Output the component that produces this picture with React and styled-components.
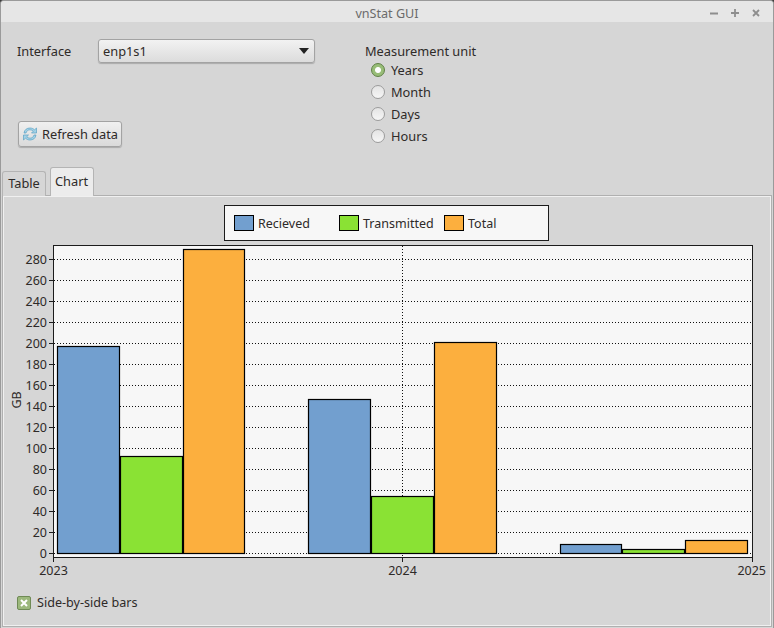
import React from "react";
import styled, { createGlobalStyle } from "styled-components";

const GlobalStyle = createGlobalStyle`
  html, body { margin: 0; padding: 0; background: #3c3c3c; }
  * { box-sizing: border-box; }
`;

const series = [
  { name: "Recieved", color: "#729fcf" },
  { name: "Transmitted", color: "#8ae234" },
  { name: "Total", color: "#fcaf3e" },
];
const bars = [
  { x: [57.5, 120.5, 183.5], w: [62, 62, 61], top: [346.5, 456.5, 249.5] },
  { x: [308.5, 371.5, 434.5], w: [62, 62, 62], top: [399.5, 496.5, 342.5] },
  { x: [560.5, 622.5, 685.5], w: [61, 62, 62], top: [544.5, 549.5, 540.5] },
];
const ticks = Array.from({ length: 15 }, (_, i) => i * 20);
const units = ["Years", "Month", "Days", "Hours"];

const Window = styled.div`
  width: 774px;
  height: 628px;
  display: flex;
  flex-direction: column;
  background: #d6d6d6;
  border: 1px solid #9a9a9a;
  border-bottom: 0;
  border-radius: 4px 4px 0 0;
  overflow: hidden;
  color: #2e2a28;
  font: 12.8px "Noto Sans", sans-serif;
`;
const TitleBar = styled.div`
  height: 21px;
  flex: none;
  padding-top: 3px;
  background: #e6e6e6;
  display: flex;
  align-items: center;
  justify-content: center;
  position: relative;
  color: #6b6b6b;
  font-size: 12.6px;
`;
const WinControls = styled.div`
  position: absolute;
  right: 13px;
  top: 8px;
  display: flex;
  gap: 13px;
  svg { display: block; }
`;
const Top = styled.div`
  height: 145px;
  flex: none;
  display: grid;
  grid-template-columns: 364px 1fr;
`;
const LeftCol = styled.div`
  padding: 17px 0 0 16px;
  display: flex;
  flex-direction: column;
`;
const InterfaceRow = styled.div`
  display: flex;
  align-items: center;
  height: 24px;
`;
const FieldLabel = styled.span`
  width: 81px;
`;
const Combo = styled.div`
  width: 217px;
  height: 24px;
  display: flex;
  align-items: center;
  justify-content: space-between;
  padding: 0 5px 0 4px;
  border: 1px solid #a3a3a3;
  border-radius: 3px;
  background: linear-gradient(#f2f2f2, #dcdcdc);
  box-shadow: 0 1px 1px rgba(0, 0, 0, 0.2);
`;
const Arrow = styled.i`
  width: 0;
  height: 0;
  border-left: 5px solid transparent;
  border-right: 5px solid transparent;
  border-top: 6px solid #222;
`;
const Button = styled.button`
  margin: 58px 0 0 1px;
  width: 104px;
  height: 26px;
  padding: 0 0 0 3px;
  display: flex;
  align-items: center;
  gap: 4px;
  border: 1px solid #a3a3a3;
  border-radius: 3px;
  background: linear-gradient(#f0f0f0, #dadada);
  box-shadow: 0 1px 1px rgba(0, 0, 0, 0.2);
  color: inherit;
  font: inherit;
`;
const RightCol = styled.div`
  padding-top: 20px;
`;
const RadioList = styled.div`
  margin-top: -1px;
`;
const RadioRow = styled.div`
  display: flex;
  align-items: center;
  gap: 6px;
  height: 22px;
  padding-left: 6px;
`;
const Radio = styled.span`
  width: 14px;
  height: 14px;
  border-radius: 50%;
  border: 1px solid ${(p) => (p.$on ? "#5f8045" : "#9c9c9c")};
  background: ${(p) =>
    p.$on
      ? "radial-gradient(circle, #fff 0 2.5px, #98bd78 3.5px)"
      : "linear-gradient(#e4e4e4, #f6f6f6)"};
`;
const Tabs = styled.div`
  height: 29px;
  flex: none;
  display: flex;
  align-items: flex-end;
  padding-left: 1px;
  gap: 4px;
  position: relative;
  z-index: 1;
  margin-bottom: -1px;
`;
const Tab = styled.div`
  width: 44px;
  height: ${(p) => (p.$on ? 29 : 25)}px;
  display: flex;
  align-items: ${(p) => (p.$on ? "flex-start" : "center")};
  justify-content: center;
  padding: ${(p) => (p.$on ? "4px 1px 0 0" : "0 0 3px")};
  border: 1px solid #b4b4b4;
  border-bottom: 0;
  border-radius: 3px 3px 0 0;
  background: ${(p) => (p.$on ? "#ececec" : "#d6d6d6")};
`;
const Panel = styled.div`
  flex: 1;
  margin: 0 1px 1px;
  border: 1px solid #b0b0b0;
  outline: 1px solid #f0f0f0;
  outline-offset: -2px;
  padding-top: 9px;
  display: flex;
  flex-direction: column;
`;
const Legend = styled.div`
  width: 325px;
  height: 36px;
  flex: none;
  margin-left: 221px;
  background: #f7f7f7;
  border: 1px solid #1c1c1c;
  display: flex;
  align-items: center;
  padding-left: 9px;
  font-size: 12.5px;
`;
const LegendItem = styled.div`
  width: ${(p) => p.$w}px;
  display: flex;
  align-items: center;
  gap: 4px;
`;
const Swatch = styled.span`
  width: 20px;
  height: 16px;
  background: ${(p) => p.$color};
  border: 1px solid #000;
`;
const ChartSvg = styled.svg`
  width: 768px;
  height: 345px;
  flex: none;
  display: block;
  text { font: 12.5px "Noto Sans", sans-serif; fill: #2e2a28; }
`;
const CheckRow = styled.div`
  display: flex;
  align-items: center;
  gap: 6px;
  margin: 8px 0 0 14px;
  font-size: 12.6px;
`;
const Check = styled.span`
  width: 14px;
  height: 14px;
  border: 1px solid #6f8a55;
  border-radius: 2px;
  background: #9cb87c;
  display: flex;
  align-items: center;
  justify-content: center;
`;

// the svg starts at window x=3, y=241, chart numbers below are window coords
function Chart() {
  return (
    <ChartSvg viewBox="0 0 768 345">
      <g transform="translate(-3 -241)">
        <rect x="53.5" y="245.5" width="699" height="312" fill="#f7f7f7" stroke="#1c1c1c" />
        {ticks.map((t) => {
          const y = Math.round(553 - t * 1.05) + 0.5;
          return (
            <g key={t}>
              <line x1="54" x2="752" y1={y} y2={y} stroke="#111" strokeDasharray="1 2" />
              <line x1="49" x2="53" y1={y} y2={y} stroke="#1c1c1c" />
              <text x="47" y={y + 4.5} textAnchor="end">{t}</text>
            </g>
          );
        })}
        <line x1="402.5" x2="402.5" y1="246" y2="557" stroke="#111" strokeDasharray="1 2" />
        {bars.map((b, i) =>
          series.map((s, j) => (
            <rect
              key={i + s.name}
              x={b.x[j]}
              y={b.top[j]}
              width={b.w[j]}
              height={553.5 - b.top[j]}
              fill={s.color}
              stroke="#000"
              strokeWidth="1.2"
            />
          ))
        )}
        {[53.5, 402.5, 752.5].map((x, i) => (
          <g key={x}>
            <line x1={x} x2={x} y1="557" y2="562" stroke="#1c1c1c" />
            <text x={i === 2 ? 766 : x} y="575" textAnchor={i === 2 ? "end" : "middle"}>{2023 + i}</text>
          </g>
        ))}
        <text transform="translate(20.5 400) rotate(-90)" textAnchor="middle">GB</text>
      </g>
    </ChartSvg>
  );
}

function RefreshIcon() {
  const arc = "M2 7C2.5 3.5 5 2 8 2c2 0 3.5.8 4.5 1.8L14.5 2v5h-5l1.8-1.8C10.5 4.4 9.3 3.8 8 3.8 6 3.8 4.6 5 4 7z";
  return (
    <svg width="16" height="16" viewBox="0 0 16 16" fill="#a4d2e6" stroke="#4a98c0" strokeWidth="0.6">
      <path d={arc} />
      <path d={arc} transform="rotate(180 8 8)" />
    </svg>
  );
}

function WinIcon({ d }) {
  return (
    <svg width="8" height="8" viewBox="0 0 8 8" fill="none" stroke="#8e8e8e" strokeWidth="1.8">
      <path d={d} />
    </svg>
  );
}

export default function App() {
  return (
    <Window>
      <GlobalStyle />
      <TitleBar>
        vnStat GUI
        <WinControls>
          <WinIcon d="M0 4.5h8" />
          <WinIcon d="M0 4h8M4 0v8" />
          <WinIcon d="M1 1l6 6M7 1L1 7" />
        </WinControls>
      </TitleBar>
      <Top>
        <LeftCol>
          <InterfaceRow>
            <FieldLabel>Interface</FieldLabel>
            <Combo>enp1s1<Arrow /></Combo>
          </InterfaceRow>
          <Button><RefreshIcon />Refresh data</Button>
        </LeftCol>
        <RightCol>
          Measurement unit
          <RadioList>
            {units.map((u, i) => (
              <RadioRow key={u}><Radio $on={i === 0} />{u}</RadioRow>
            ))}
          </RadioList>
        </RightCol>
      </Top>
      <Tabs>
        <Tab>Table</Tab>
        <Tab $on>Chart</Tab>
      </Tabs>
      <Panel>
        <Legend>
          {series.map((s, i) => (
            <LegendItem key={s.name} $w={[105, 105, 90][i]}>
              <Swatch $color={s.color} />{s.name}
            </LegendItem>
          ))}
        </Legend>
        <Chart />
        <CheckRow>
          <Check>
            <svg width="8" height="8" viewBox="0 0 8 8" stroke="#fff" strokeWidth="2"><path d="M1 1l6 6M7 1l-6 6" /></svg>
          </Check>
          Side-by-side bars
        </CheckRow>
      </Panel>
    </Window>
  );
}
